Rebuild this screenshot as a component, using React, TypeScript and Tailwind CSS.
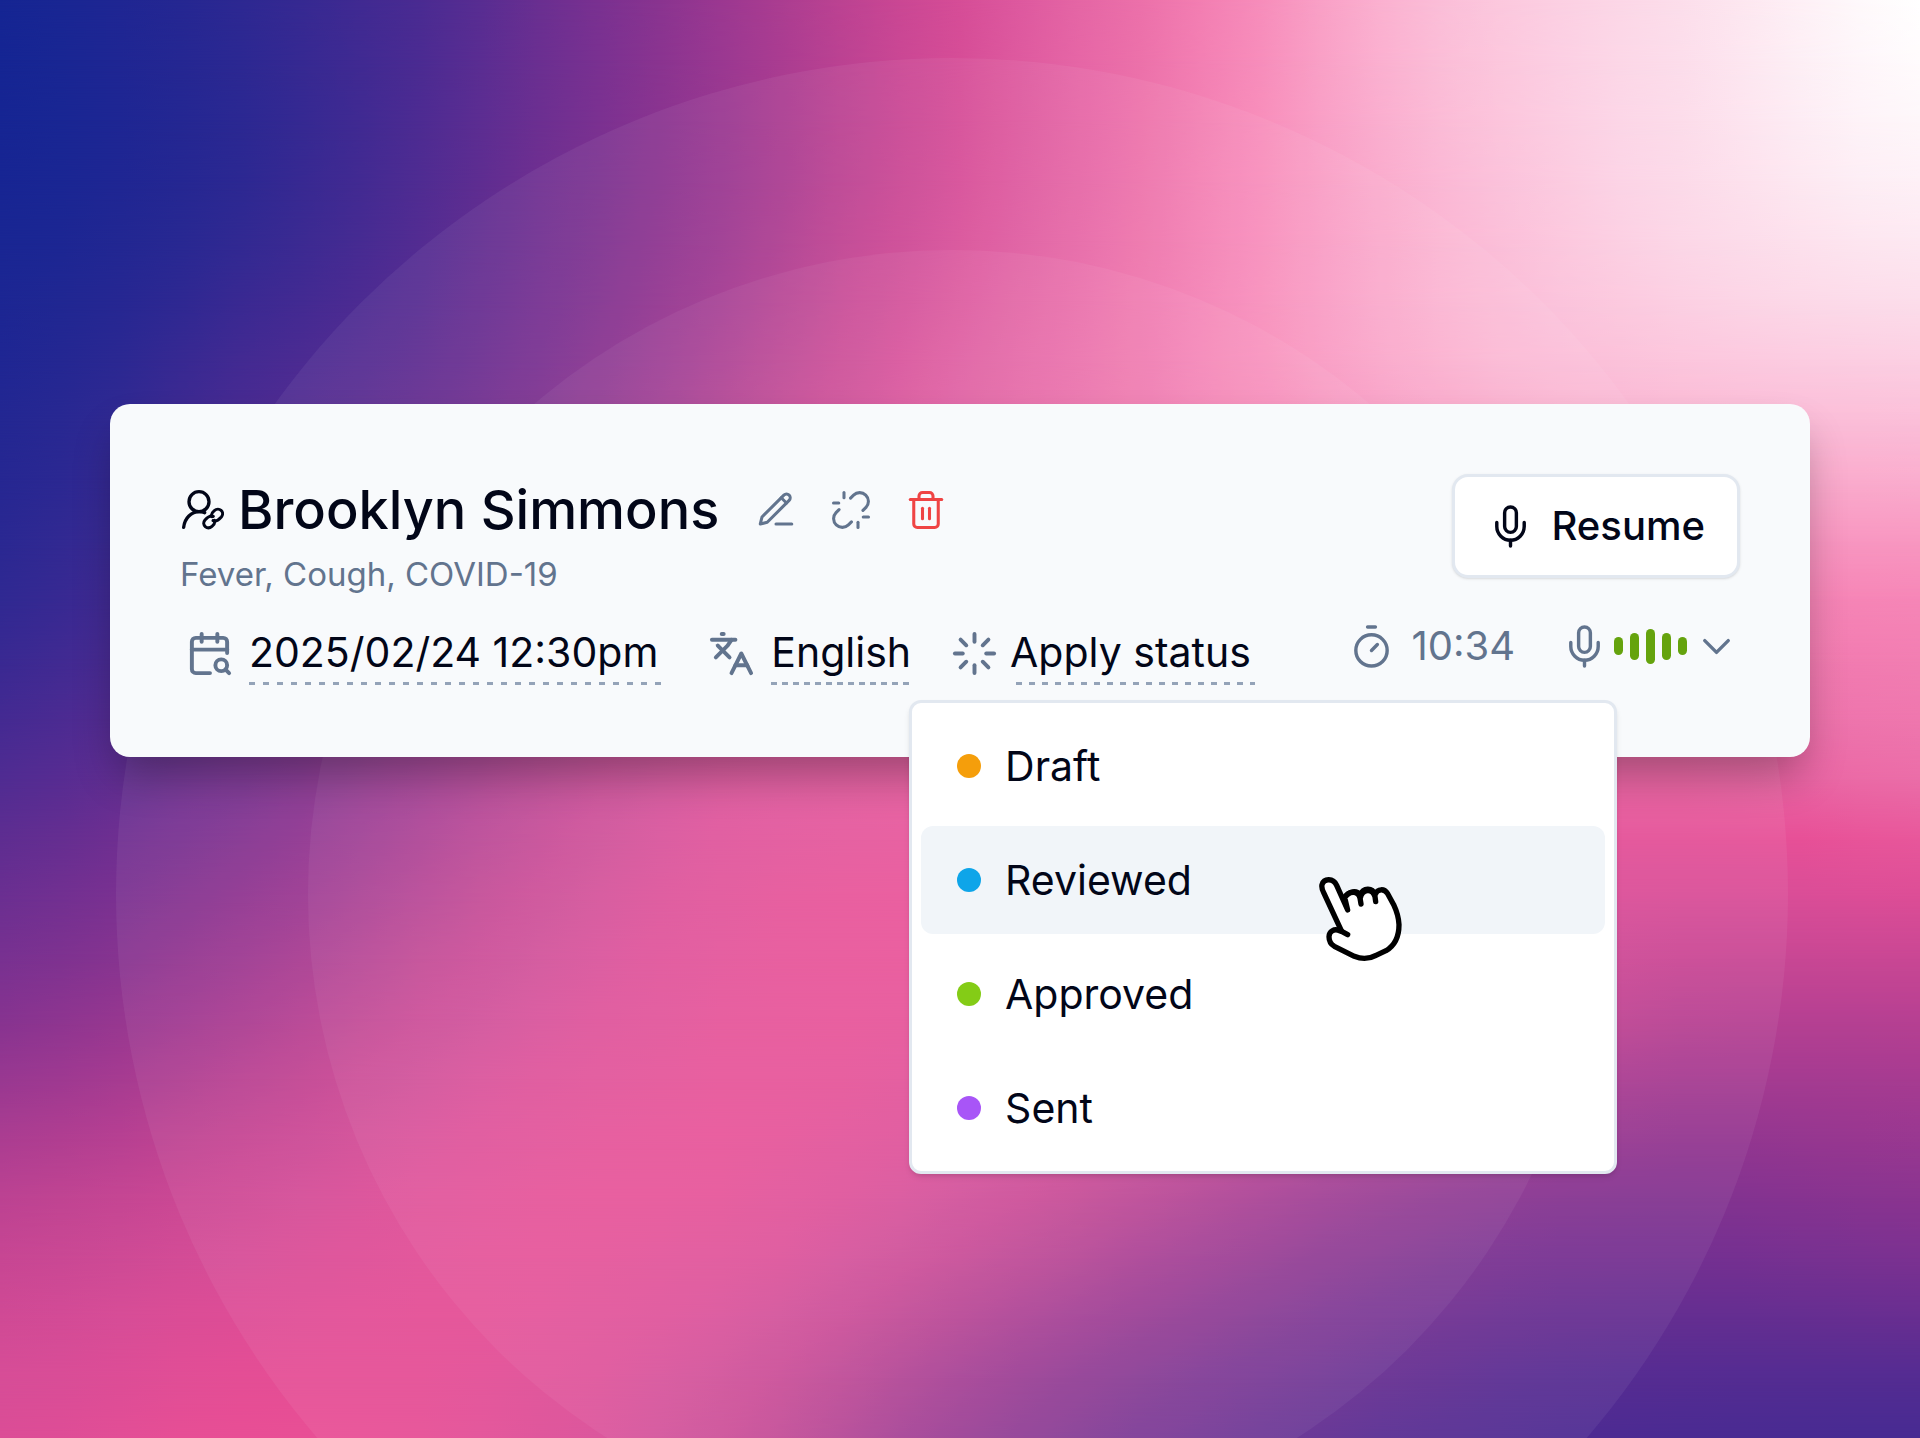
import { useState } from 'react';
import type { CSSProperties, ReactNode } from 'react';
import { CalendarSearch, ChevronDown, Languages, Loader, Mic, Timer, Trash2, Unlink } from 'lucide-react';

interface StatusOption {
  id: string;
  label: string;
  dot: string;
}

const STATUSES: StatusOption[] = [
  { id: 'draft', label: 'Draft', dot: 'bg-[#f59e0b]' },
  { id: 'reviewed', label: 'Reviewed', dot: 'bg-[#0ea5e9]' },
  { id: 'approved', label: 'Approved', dot: 'bg-[#84cc16]' },
  { id: 'sent', label: 'Sent', dot: 'bg-[#a855f7]' },
];

const LEVELS = ['h-[18px]', 'h-[27px]', 'h-[35px]', 'h-[27px]', 'h-[18px]'];

// Colour ramp of the backdrop, from deep blue through pink to white
const RAMP = [
  [21, 37, 147],
  [42, 40, 146],
  [74, 43, 146],
  [110, 47, 145],
  [138, 52, 144],
  [166, 59, 145],
  [194, 68, 146],
  [214, 77, 151],
  [232, 78, 149],
  [236, 112, 170],
  [247, 136, 184],
  [251, 180, 210],
  [252, 213, 230],
  [253, 235, 243],
  [255, 255, 255],
];

// The pink is softer towards the top of the page
const SOFT_PINK = [226, 96, 163];
const SOFT_RAMP = RAMP.map((color, i) => (i === 8 ? SOFT_PINK : color));

// Positions on the ramp: one row per mesh line, evenly spaced columns
const MESH_Y = [0, 200, 400, 600, 800, 1000, 1200, 1438];
const MESH = [
  [0, 1.1, 2.4, 4.6, 7, 9.6, 11.3, 12.4, 14],
  [0.1, 1.1, 2.6, 4.6, 7.1, 9.7, 11.1, 12.2, 13.2],
  [0.6, 1.9, 3.1, 5.3, 7.8, 9.7, 10.8, 11.3, 11.5],
  [1.2, 2.5, 4.2, 6.3, 8, 8.9, 9.3, 9.7, 9.9],
  [2.3, 3.5, 5.4, 7.3, 8, 8.3, 8.3, 8.2, 8.7],
  [3.7, 5, 6.6, 7.8, 7.9, 7.5, 6.9, 5.9, 5.8],
  [5.8, 6.7, 7.7, 7.8, 6.7, 5.3, 4.1, 3.7, 4],
  [7.3, 8, 7.7, 6.4, 4.4, 3, 2.3, 2, 1.9],
];

function spline(values: number[], pos: number) {
  const last = values.length - 1;
  const i = Math.min(Math.floor(pos), last - 1);
  const t = pos - i;
  const p1 = values[i];
  const p2 = values[i + 1];
  const p0 = values[Math.max(i - 1, 0)];
  const p3 = values[Math.min(i + 2, last)];
  return p1 + 0.5 * t * (p2 - p0 + t * (2 * p0 - 5 * p1 + 4 * p2 - p3 + t * (3 * (p1 - p2) + p3 - p0)));
}

function mix(a: number[], b: number[], t: number) {
  return a.map((c, k) => c + (b[k] - c) * t);
}

function rampColor(value: number, warmth: number) {
  const v = Math.min(Math.max(value, 0), RAMP.length - 1);
  const i = Math.min(Math.floor(v), RAMP.length - 2);
  const soft = mix(SOFT_RAMP[i], SOFT_RAMP[i + 1], v - i);
  const hot = mix(RAMP[i], RAMP[i + 1], v - i);
  return `rgb(${mix(soft, hot, warmth).map(Math.round).join(',')})`;
}

function meshLayer(row: number, rows: number): CSSProperties {
  const y = (row / (rows - 1)) * 1438;
  let seg = 0;
  while (seg < MESH_Y.length - 2 && y > MESH_Y[seg + 1]) seg++;
  const pos = seg + (y - MESH_Y[seg]) / (MESH_Y[seg + 1] - MESH_Y[seg]);
  const line = MESH[0].map((_, col) => spline(MESH.map((r) => r[col]), pos));
  const warmth = Math.min(Math.max((y - 400) / 500, 0), 1);
  const stops = Array.from({ length: 33 }, (_, i) => `${rampColor(spline(line, i / 4), warmth)} ${(i / 32) * 100}%`);
  const from = ((row - 1) / (rows - 1)) * 100;
  const to = (row / (rows - 1)) * 100;
  return {
    backgroundImage: `linear-gradient(to right, ${stops.join(', ')})`,
    maskImage: row === 0 ? undefined : `linear-gradient(to bottom, transparent ${from}%, black ${to}%)`,
  };
}

const LAYERS = Array.from({ length: 25 }, (_, i) => meshLayer(i, 25));

function Backdrop() {
  return (
    <div aria-hidden="true" className="pointer-events-none absolute inset-0 overflow-hidden">
      {LAYERS.map((style, i) => (
        <div key={i} className="absolute inset-0" style={style} />
      ))}
      <div className="absolute left-[49.6%] top-[894px] size-[1672px] -translate-x-1/2 -translate-y-1/2 rounded-full bg-white/6" />
      <div className="absolute left-[49.6%] top-[894px] size-[1288px] -translate-x-1/2 -translate-y-1/2 rounded-full bg-white/5" />
    </div>
  );
}

function UserLinkIcon() {
  return (
    <svg className="ml-0.5 h-10 w-[42px] shrink-0" viewBox="0 0 126 120" fill="none" stroke="currentColor" strokeWidth="10" strokeLinecap="round">
      <circle cx="51" cy="35" r="30" />
      <path d="M5 112C8 84 28 65 52 65c7 0 11 1 16 3" />
      <path d="M90 80c-5-8 1-13 7-18 14-13 33 4 21 19-7 8-14 15-25 11" strokeWidth="9" />
      <path d="M97 91c4 8-1 13-7 18-14 12-33-4-21-19 7-8 14-15 25-11" strokeWidth="9" />
    </svg>
  );
}

function PenIcon() {
  return (
    <svg className="size-[42px]" viewBox="0 0 24 24" fill="none" stroke="currentColor" strokeWidth="1.75" strokeLinecap="round" strokeLinejoin="round">
      <path d="M12 20h9" />
      <path d="M16.5 3.5a2.12 2.12 0 0 1 3 3L7 19l-4 1 1-4Z" />
      <path d="m15 5 3 3" />
    </svg>
  );
}

function HandCursor() {
  return (
    <svg
      aria-hidden="true"
      className="pointer-events-none absolute left-[398px] top-[50px] z-10 h-[86px] w-[84px]"
      viewBox="0 0 252 258"
      fill="white"
      stroke="black"
      strokeWidth="16"
      strokeLinecap="round"
      strokeLinejoin="round"
    >
      <path d="M86 102 53 28C43 6 15 6 9 26c-2 8 1 16 5 24l54 116-5-1c-17-10-33 2-33 17 0 14 6 23 16 29l60 30c22 9 45 8 65-3l30-14c30-18 39-48 39-78-1-25-9-45-16-60l-18-33C196 37 176 37 168 56 160 34 133 34 123 58 115 42 90 44 77 64Z" />
      <path d="M68 166 86 176M77 66c12-22 40-24 46 0l3 18M124 66c6-28 36-30 44-4l2 15" />
    </svg>
  );
}

function IconButton({ label, color = 'text-slate-500', children }: { label: string; color?: string; children: ReactNode }) {
  return (
    <button type="button" aria-label={label} className={`cursor-pointer ${color}`}>
      {children}
    </button>
  );
}

function StatusMenu({ active, onSelect }: { active: string; onSelect: (id: string) => void }) {
  return (
    <div
      role="menu"
      className="absolute -left-[42px] top-[78px] z-10 flex w-[708px] flex-col gap-1.5 rounded-xl border-3 border-slate-200 bg-white p-[9px] shadow-md"
    >
      {STATUSES.map((status) => (
        <div key={status.id} className="relative">
          <button
            type="button"
            role="menuitem"
            onClick={() => onSelect(status.id)}
            className={`flex h-[108px] w-full cursor-pointer items-center gap-6 rounded-xl px-9 text-left text-[41px] ${
              active === status.id ? 'bg-slate-100' : ''
            }`}
          >
            <span className={`size-6 rounded-full ${status.dot}`} />
            {status.label}
          </button>
          {active === status.id && <HandCursor />}
        </div>
      ))}
    </div>
  );
}

export default function App() {
  const [active, setActive] = useState('reviewed');

  return (
    <main className="relative min-h-screen overflow-hidden px-[110px] pt-[404px] font-['Inter','Liberation_Sans',sans-serif] text-slate-950">
      <Backdrop />

      <section className="relative flex items-start justify-between rounded-[20px] bg-slate-50 px-[70px] pb-[72px] pt-[70px] shadow-[0_24px_44px_-8px_rgba(0,0,0,0.32)]">
        <div>
          <div className="flex h-[72px] items-center">
            <UserLinkIcon />
            <h1 className="ml-3.5 text-[54px] font-medium leading-[72px]">Brooklyn Simmons</h1>
            <div className="ml-9 flex gap-[33px]">
              <IconButton label="Edit patient">
                <PenIcon />
              </IconButton>
              <IconButton label="Unlink patient">
                <Unlink size={42} strokeWidth={1.75} />
              </IconButton>
              <IconButton label="Delete session" color="text-[#ef4444]">
                <Trash2 size={42} strokeWidth={1.75} />
              </IconButton>
            </div>
          </div>

          <p className="text-[33px] leading-[56px] text-slate-500">Fever, Cough, COVID-19</p>

          <div className="mt-5 flex items-center text-[41px] leading-[60px]">
            <button type="button" className="flex cursor-pointer items-center gap-4 pl-1.5">
              <CalendarSearch size={47} className="text-slate-500" />
              <span className="bg-[repeating-linear-gradient(90deg,#94a3b8_0_6px,transparent_6px_14px)] bg-[length:100%_3px] bg-bottom bg-no-repeat pb-[3px] pr-2">
                2025/02/24 12:30pm
              </span>
            </button>
            <button type="button" className="ml-[42px] flex cursor-pointer items-center gap-4">
              <Languages size={47} className="text-slate-500" />
              <span className="bg-[repeating-linear-gradient(90deg,#94a3b8_0_6px,transparent_6px_11px)] bg-[length:100%_3px] bg-bottom bg-no-repeat pb-[3px]">
                English
              </span>
            </button>
            <div className="relative ml-10">
              <button type="button" aria-haspopup="menu" aria-expanded="true" className="flex cursor-pointer items-center gap-3">
                <Loader size={47} className="text-slate-500" />
                <span className="bg-[repeating-linear-gradient(90deg,#94a3b8_0_6px,transparent_6px_13px)] bg-[length:100%_3px] bg-[position:6px_100%] bg-no-repeat pb-[3px] pr-1">
                  Apply status
                </span>
              </button>
              <StatusMenu active={active} onSelect={setActive} />
            </div>
          </div>
        </div>

        <div className="flex flex-col items-end">
          <button
            type="button"
            className="flex h-[104px] cursor-pointer items-center gap-[18px] rounded-2xl border-3 border-slate-200 bg-white px-8 text-[40px] font-medium shadow-sm"
          >
            <Mic size={47} strokeWidth={1.75} />
            Resume
          </button>

          <div className="mt-11 flex h-12 items-center text-slate-500">
            <Timer size={47} strokeWidth={1.75} />
            <span className="ml-4 text-[40px] leading-[48px]">10:34</span>
            <button type="button" aria-label="Microphone input" className="ml-[46px] flex cursor-pointer items-center gap-1.5">
              <Mic size={47} strokeWidth={1.75} />
              <span className="flex items-center gap-[7px]">
                {LEVELS.map((height, i) => (
                  <span key={i} className={`w-[9px] rounded-full bg-[#65a30d] ${height}`} />
                ))}
              </span>
              <ChevronDown size={47} strokeWidth={1.75} />
            </button>
          </div>
        </div>
      </section>
    </main>
  );
}
